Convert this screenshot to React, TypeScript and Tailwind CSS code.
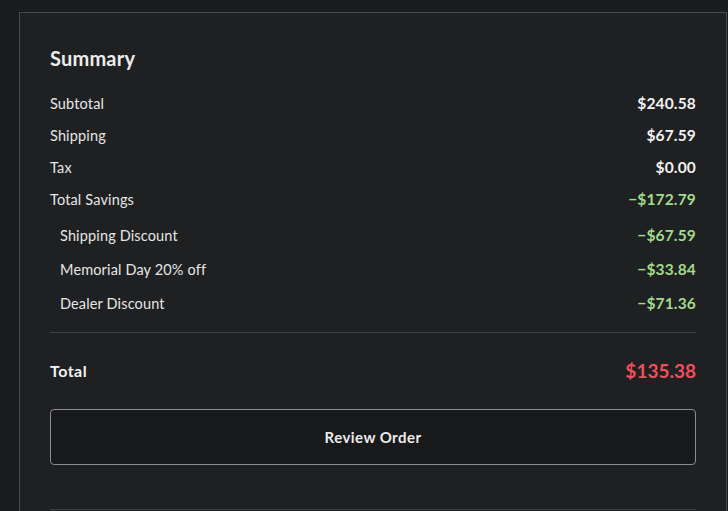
import React from "react";

type Line = { label: string; value: string; saving?: boolean };

const lines: Line[] = [
  { label: "Subtotal", value: "$240.58" },
  { label: "Shipping", value: "$67.59" },
  { label: "Tax", value: "$0.00" },
  { label: "Total Savings", value: "\u2212$172.79", saving: true },
];

const discounts: Line[] = [
  { label: "Shipping Discount", value: "\u2212$67.59" },
  { label: "Memorial Day 20% off", value: "\u2212$33.84" },
  { label: "Dealer Discount", value: "\u2212$71.36" },
];

function Row({ line, sub }: { line: Line; sub?: boolean }) {
  return (
    <div
      className={`flex items-center justify-between ${sub ? "h-[34px] pl-[10px]" : "h-[32px]"}`}
    >
      <span className="text-[14.5px] tracking-[0.01em] text-[#e6e6e6]">{line.label}</span>
      <span
        className={`text-[15.5px] font-bold tracking-[0.01em] ${line.saving || sub ? "text-[#a3db8c]" : "text-[#f2f2f2]"}`}
      >
        {line.value}
      </span>
    </div>
  );
}

export default function App() {
  return (
    <div
      className="min-h-[511px] w-[728px] overflow-hidden bg-[#1b1c1e] pt-[12px] pl-[19px]"
      style={{ fontFamily: "Lato, 'Open Sans', sans-serif" }}
    >
      <div className="w-[708px] border border-[#474b4d] bg-[#1e2022] px-[30px] pt-[31px]">
        <h2 className="h-[28px] text-[20px] font-bold leading-[28px] tracking-[0.01em] text-[#ececec]">
          Summary
        </h2>
        <div className="mt-[16px]">
          {lines.map((l) => (
            <Row key={l.label} line={l} />
          ))}
        </div>
        <div className="mt-[3px]">
          {discounts.map((l) => (
            <Row key={l.label} line={l} sub />
          ))}
        </div>
        <div className="mt-[11px] border-t border-[#3d4043]" />
        <div className="mt-[26px] flex h-[24px] items-center justify-between">
          <span className="text-[16px] font-bold tracking-[0.03em] text-[#f2f2f2]">Total</span>
          <span className="text-[19px] font-bold text-[#ee4f5b]">$135.38</span>
        </div>
        <button className="mt-[26px] flex h-[56px] w-full items-center justify-center rounded-[4px] border border-[#8c8c8c] bg-[#18191b] text-[15px] font-bold tracking-[0.03em] text-[#ececec]">
          Review Order
        </button>
        <div className="mt-[44px] border-t border-[#3d4043]" />
        <div className="h-[20px]" />
      </div>
    </div>
  );
}
